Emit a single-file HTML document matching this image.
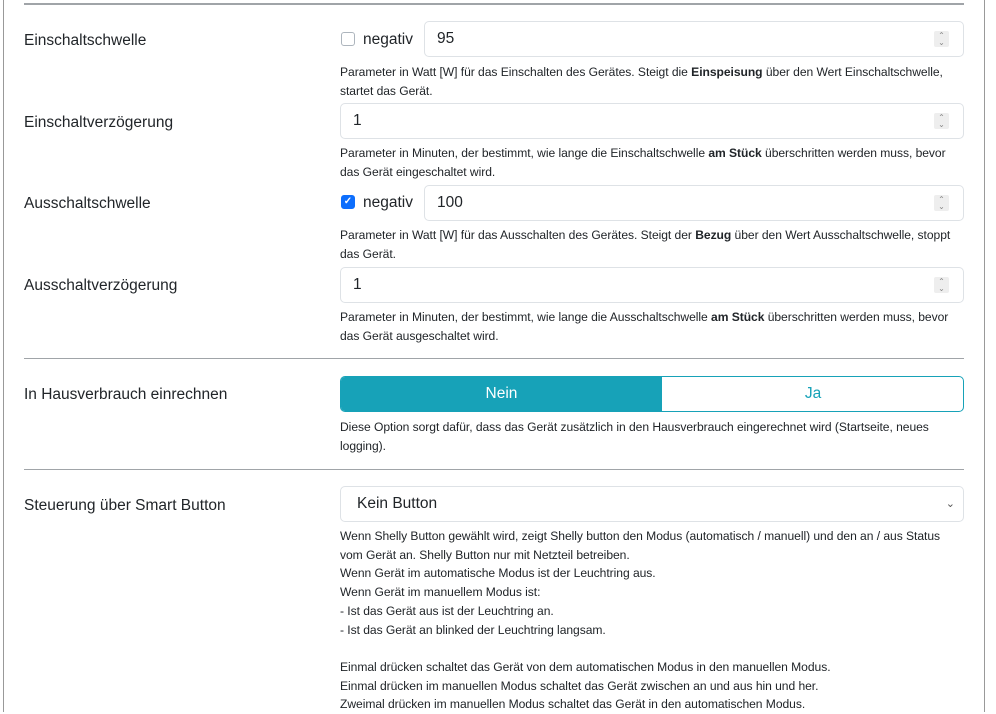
<!DOCTYPE html>
<html><head><meta charset="utf-8"><style>
*{box-sizing:border-box;margin:0;padding:0}
body{width:996px;height:712px;background:#fff;font-family:"Liberation Sans",sans-serif;color:#212529;position:relative;overflow:hidden}
.a{position:absolute}
.lbl{position:absolute;left:24px;font-size:15.5px;line-height:20px}
.hr{position:absolute;left:24px;width:940px;height:1px;background:#a0a4a8}
.inp{position:absolute;height:36px;border:1px solid #dee2e6;border-radius:5px;font-size:15.5px;line-height:34px;padding-left:12px}
.spin{position:absolute;right:14px;top:9px;width:15px;height:16px;background:#eee;border-radius:2px;font-size:8px;line-height:7px;text-align:center;color:#888;padding-top:1px}
.help{position:absolute;left:340px;font-size:12.1px;line-height:18.7px;width:630px;letter-spacing:-0.05px}
.cb{position:absolute;left:341px;width:14px;height:14px;border:1px solid #adb5bd;border-radius:3px}
.neg{position:absolute;left:363px;font-size:15.5px;line-height:20px}
</style></head><body>
<div class="a" style="left:3px;top:0;width:1px;height:712px;background:#999"></div>
<div class="a" style="left:984px;top:0;width:1px;height:712px;background:#999"></div>
<div class="hr" style="top:3px;height:2px"></div>

<div class="lbl" style="top:31px">Einschaltschwelle</div>
<div class="cb" style="top:32px"></div><div class="neg" style="top:30px">negativ</div>
<div class="inp" style="left:424px;top:21px;width:540px">95<div class="spin">⌃<br>⌄</div></div>
<div class="help" style="top:63px">Parameter in Watt [W] für das Einschalten des Gerätes. Steigt die <b>Einspeisung</b> über den Wert Einschaltschwelle,<br>startet das Gerät.</div>

<div class="lbl" style="top:113px">Einschaltverzögerung</div>
<div class="inp" style="left:340px;top:103px;width:624px">1<div class="spin">⌃<br>⌄</div></div>
<div class="help" style="top:144px">Parameter in Minuten, der bestimmt, wie lange die Einschaltschwelle <b>am Stück</b> überschritten werden muss, bevor<br>das Gerät eingeschaltet wird.</div>

<div class="lbl" style="top:194px">Ausschaltschwelle</div>
<div class="cb" style="top:195px;background:#0d6efd;border-color:#0d6efd;color:#fff;font-size:10px;line-height:12px;text-align:center;font-weight:bold">✓</div><div class="neg" style="top:193px">negativ</div>
<div class="inp" style="left:424px;top:185px;width:540px">100<div class="spin">⌃<br>⌄</div></div>
<div class="help" style="top:226px">Parameter in Watt [W] für das Ausschalten des Gerätes. Steigt der <b>Bezug</b> über den Wert Ausschaltschwelle, stoppt<br>das Gerät.</div>

<div class="lbl" style="top:276px">Ausschaltverzögerung</div>
<div class="inp" style="left:340px;top:267px;width:624px">1<div class="spin">⌃<br>⌄</div></div>
<div class="help" style="top:308px">Parameter in Minuten, der bestimmt, wie lange die Ausschaltschwelle <b>am Stück</b> überschritten werden muss, bevor<br>das Gerät ausgeschaltet wird.</div>

<div class="hr" style="top:358px"></div>

<div class="lbl" style="top:385px">In Hausverbrauch einrechnen</div>
<div class="a" style="left:340px;top:376px;width:624px;height:36px;border:1px solid #17a2b8;border-radius:5px;overflow:hidden;font-size:15.5px;line-height:34px;text-align:center">
<div class="a" style="left:0;top:0;width:321px;height:34px;background:#17a2b8;color:#fff">Nein</div>
<div class="a" style="left:321px;top:0;width:302px;height:34px;color:#17a2b8">Ja</div></div>
<div class="help" style="top:418px">Diese Option sorgt dafür, dass das Gerät zusätzlich in den Hausverbrauch eingerechnet wird (Startseite, neues<br>logging).</div>

<div class="hr" style="top:469px"></div>

<div class="lbl" style="top:496px">Steuerung über Smart Button</div>
<div class="inp" style="left:340px;top:486px;width:624px;height:36px;padding-left:16px">Kein Button<span class="a" style="right:8px;top:0;font-size:11px;color:#555">⌄</span></div>
<div class="help" style="top:527px">Wenn Shelly Button gewählt wird, zeigt Shelly button den Modus (automatisch / manuell) und den an / aus Status<br>vom Gerät an. Shelly Button nur mit Netzteil betreiben.<br>Wenn Gerät im automatische Modus ist der Leuchtring aus.<br>Wenn Gerät im manuellem Modus ist:<br>- Ist das Gerät aus ist der Leuchtring an.<br>- Ist das Gerät an blinked der Leuchtring langsam.<br><br>Einmal drücken schaltet das Gerät von dem automatischen Modus in den manuellen Modus.<br>Einmal drücken im manuellen Modus schaltet das Gerät zwischen an und aus hin und her.<br>Zweimal drücken im manuellen Modus schaltet das Gerät in den automatischen Modus.</div>
</body></html>
